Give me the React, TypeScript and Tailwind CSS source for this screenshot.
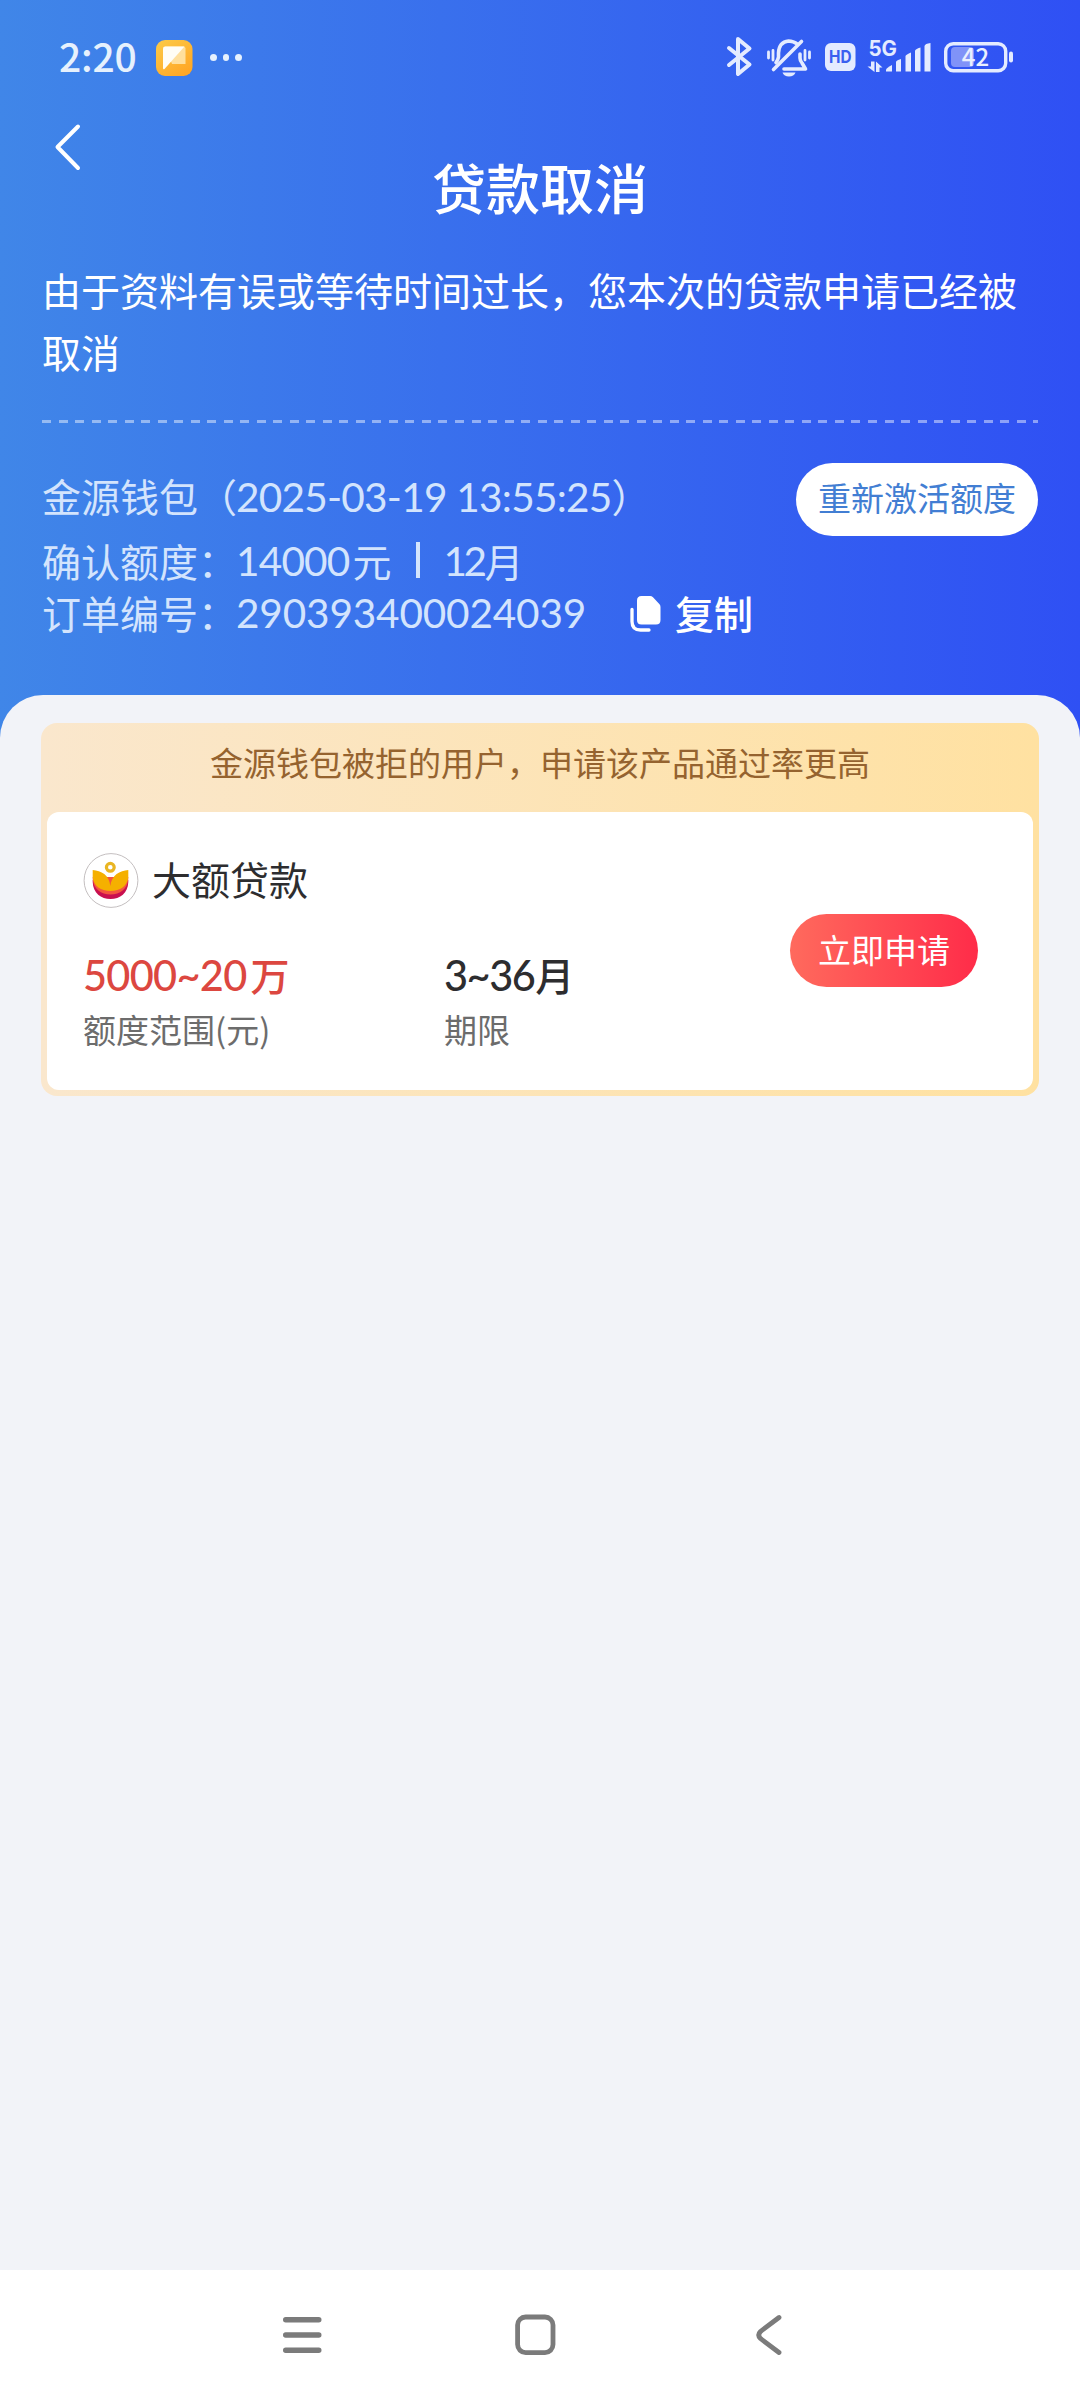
import React from "react";

const latin = "font-[Lato] leading-none";

function StatusBar() {
  return (
    <div className="flex h-[116px] items-start justify-between pl-[59px] pr-[66px]">
      <div className="flex h-[116px] items-center">
        <span className="mb-[7px] w-[78px] whitespace-nowrap font-['Noto_Sans_CJK_SC'] text-[39px] font-medium leading-[40px] tracking-[-0.2px] text-[#e6f1fd]">
          2:20
        </span>
        <svg className="ml-[19px]" width="37" height="38" viewBox="0 0 37 38">
          <defs>
            <linearGradient id="note" x1="0" y1="0" x2="0.7" y2="1">
              <stop offset="0" stopColor="#fccb48" />
              <stop offset="1" stopColor="#ffa726" />
            </linearGradient>
          </defs>
          <rect x="0" y="1" width="36.500" height="36" rx="9" fill="url(#note)" />
          <path d="M9 7.500H27.500Q29.500 7.500 29.500 9.500V25H16Z" fill="#ffdf9c" />
          <path d="M9 7.500H28.500L8.500 30Q7 31 7 29V9.500Q7 7.500 9 7.500Z" fill="#fffdf6" />
        </svg>
        <div className="ml-[17px] mb-[1px] flex gap-[6px]">
          <i className="size-[6.500px] rounded-full bg-[#e6f1fd]" />
          <i className="size-[6.500px] rounded-full bg-[#e6f1fd]" />
          <i className="size-[6.500px] rounded-full bg-[#e6f1fd]" />
        </div>
      </div>
      <svg className="mt-[20px]" width="314" height="80" viewBox="700 20 314 80" fill="none" stroke="#e4ebff" strokeLinecap="round" strokeLinejoin="round">
        <path d="M729 48L749.500 64.500L738 74V39L749.500 48.500L729 65" strokeWidth="4" />
        <g strokeWidth="3.600">
          <path d="M797.500 44.200Q793.500 41 788.500 41Q779 42 778.500 53V57Q778 60 776 62.500" />
          <path d="M801.500 41.500L773.500 69.500" />
          <path d="M800 54V58Q800 60.500 802 63L805.500 69H784" />
          <path d="M768.500 52V58M773 50.500V60M805 50.500V60M809.500 52V58" strokeWidth="2.800" />
        </g>
        <path d="M782.500 72.500H795.500Q794 76.500 789 76.500T782.500 72.500Z" fill="#e4ebff" stroke="none" />
        <rect x="825" y="43" width="30.500" height="28" rx="6" fill="#e4ebff" stroke="none" />
        <text x="829" y="62.800" fontFamily="Inter" fontWeight="700" fontSize="17" textLength="22.500" lengthAdjust="spacingAndGlyphs" fill="#3a5ff0" stroke="none">HD</text>
        <text x="868.500" y="55.500" fontFamily="Inter" fontWeight="700" fontSize="21" textLength="28.500" lengthAdjust="spacingAndGlyphs" fill="#e4ebff" stroke="none">5G</text>
        <g fill="#e4ebff" stroke="none">
          <path d="M871 61.500H874.500V72L867.500 66.500H871Z" />
          <path d="M876 61.500L882.500 67.500H879.500V72H876Z" />
          <path d="M886 71.500V69.500Q887 67.500 892 65V71.500Z" />
          <path d="M896 71.500V62Q896 60.500 901 59V71.500Z" />
          <path d="M905.500 71.500V56Q906 54.500 911 52.500V71.500Z" />
          <path d="M915 71.500V51Q915 49 920.500 47.500V71.500Z" />
          <path d="M924.500 71.500V46Q925 43.500 930.500 43V71.500Z" />
        </g>
        <rect x="951" y="47" width="23" height="20" rx="4" fill="#8093f8" stroke="none" />
        <rect x="945.700" y="43.700" width="60" height="27" rx="7.500" strokeWidth="3.400" />
        <path d="M1011 53.500V60.500" strokeWidth="4" />
        <text x="975.500" y="66" textAnchor="middle" fontFamily="Noto Sans CJK SC" fontWeight="500" fontSize="24" fill="#e9efff" stroke="none">42</text>
      </svg>
    </div>
  );
}

function Hero() {
  return (
    <header className="h-[760px] bg-linear-to-r/srgb from-[#4086e8] to-[#2f50f4]">
      <StatusBar />
      <div className="px-[42px]">
        <svg className="ml-[12px] mt-[6px]" width="30" height="50" viewBox="54 122 30 50" fill="none" stroke="#fff" strokeWidth="4" strokeLinecap="round" strokeLinejoin="round">
          <path d="M78 126.500L57.500 147L78 168" />
        </svg>
        <h1 className="-mt-[18px] text-center text-[54px] font-medium leading-[66px] text-white">贷款取消</h1>
        <p className="mt-[38px] text-[39px] leading-[62.400px] text-white">
          由于资料有误或等待时间过长，您本次的贷款申请已经被取消
        </p>
        <div className="mt-[37px] h-[3px] bg-[repeating-linear-gradient(90deg,rgba(255,255,255,0.450)_0_9px,transparent_9px_16.520px)]" />
        <div className="mt-[40px] flex h-[73px] items-start justify-between">
          <div className="whitespace-nowrap text-[39px] leading-[64px] text-[#d3e4fd]">
            金源钱包（<span className={`${latin} -ml-[1px] text-[40.500px] tracking-[-0.740px]`}>2025-03-19 13:55:25</span>）
          </div>
          <button className="h-[73px] w-[242px] rounded-full bg-white pb-[4px] text-[33px] leading-[69px] text-[#427ed3]">重新激活额度</button>
        </div>
        <div className="-mt-[1px] flex h-[50px] items-center whitespace-nowrap text-[39px] leading-[50px] text-[#d3e4fd]">
          <span>确认额度：</span>
          <span className={`${latin} -ml-[1px] mr-[3px] pt-[2px] text-[40.500px] tracking-[-0.800px]`}>14000</span>
          <span>元</span>
          <i className="ml-[25px] mr-[23px] h-[36px] w-[4px] bg-[#d3e4fd]" />
          <span className={`${latin} mr-[1px] pt-[2px] text-[40.500px] tracking-[-3.500px]`}>12</span>
          <span>月</span>
        </div>
        <div className="mt-[2px] flex h-[50px] items-center whitespace-nowrap text-[39px] leading-[50px] text-[#d3e4fd]">
          <span>订单编号：</span>
          <span className={`${latin} -ml-[1px] w-[394px] pt-[3px] text-[40.500px] tracking-[-0.150px]`}>290393400024039</span>
          <svg className="mt-[5px]" width="32" height="38" viewBox="0 0 32 38">
            <path d="M11.500 1H20Q21.800 1 23 2.200L29.300 9Q30.500 10.200 30.500 12V25Q30.500 29.500 26 29.500H11.500Q7 29.500 7 25V5.500Q7 1 11.500 1Z" fill="#fff" />
            <path d="M2 14.500V26.500Q2 35 10.500 35H19" fill="none" stroke="#fff" strokeWidth="3.300" strokeLinecap="round" />
          </svg>
          <span className="ml-[13px] font-medium text-white">复制</span>
        </div>
      </div>
    </header>
  );
}

function OfferCard() {
  return (
    <section className="rounded-[16px] bg-linear-to-r/srgb from-[#fae7cd] to-[#ffe1a1] px-[6px] pb-[6px]">
      <p className="h-[89px] pt-[4px] text-center text-[33px] leading-[70px] text-[#95632f]">
        金源钱包被拒的用户，申请该产品通过率更高
      </p>
      <div className="flex h-[278px] rounded-[12px] bg-white pl-[36px] pr-[55px] pt-[41px]">
        <div>
          <div className="flex h-[55px] items-center">
            <svg width="56" height="55" viewBox="0 0 56 55">
              <circle cx="28" cy="27.500" r="26.900" fill="#fff" stroke="#c4bfc0" />
              <path d="M9.700 27V29C10 40 18 46 27.500 46C37 46 45 40 45.300 29V27Z" fill="#c9104f" />
              <path d="M9.700 24V26C10.500 36 18 41.500 27.500 41.500C37 41.500 44.500 36 45.300 26V24Z" fill="#f4553f" />
              <path d="M9.700 17C18 17.500 26.500 22 27.300 33C28.500 22 37 17.500 45.300 17V24C44.500 33 37 38 27.500 38C18 38 10.500 33 9.700 24Z" fill="#f5b000" />
              <circle cx="27.300" cy="14.300" r="3.900" fill="none" stroke="#e9b522" strokeWidth="3.200" />
            </svg>
            <h2 className="mb-[6px] ml-[13px] text-[39px] leading-[50px] text-[#2d2d2f]">大额贷款</h2>
          </div>
          <div className="mt-[41px] flex font-medium text-[39px] leading-[50px]">
            <div className="flex w-[361px] items-center text-[#dc4740]">
              <span className={`${latin} mr-[4px] pt-[3px] text-[41.500px] tracking-[-0.700px]`}>5000~20</span>万
            </div>
            <div className="flex items-center text-[#2d2d2f]">
              <span className={`${latin} mr-[1px] pt-[3px] text-[41.500px] tracking-[-1.500px]`}>3~36</span>月
            </div>
          </div>
          <div className="mt-[8px] flex text-[33px] leading-[44px] text-[#6c6c6c]">
            <span className="w-[361px]">额度范围(元)</span>
            <span>期限</span>
          </div>
        </div>
        <button className="ml-auto mt-[61px] h-[73px] w-[188px] rounded-full bg-linear-to-r/srgb from-[#ff6a5d] to-[#ff2c49] pb-[3px] text-[33px] leading-[70px] text-white">
          立即申请
        </button>
      </div>
    </section>
  );
}

function NavigationBar() {
  return (
    <nav className="flex h-[130px] items-start bg-white pl-[280px] pt-[38px]">
      <svg width="45" height="54" viewBox="280 2308 45 54" stroke="#7b7b7b" strokeWidth="5.400" strokeLinecap="round">
        <path d="M285.700 2319.700H318.800M285.700 2335H318.800M285.700 2350.300H318.800" />
      </svg>
      <svg className="ml-[187px]" width="46" height="54" viewBox="512 2308 46 54" fill="none" stroke="#7b7b7b" strokeWidth="4.800">
        <rect x="517.600" y="2317" width="35.400" height="35.600" rx="8" />
      </svg>
      <svg className="ml-[194px]" width="36" height="54" viewBox="752 2308 36 54" fill="none" stroke="#7b7b7b" strokeWidth="4.800" strokeLinecap="round">
        <path d="M779 2317.500L760.500 2331.500Q757 2335 760.500 2338.500L779 2352.500" />
      </svg>
    </nav>
  );
}

export default function App() {
  return (
    <div lang="zh-CN" className="flex h-[2400px] w-[1080px] flex-col overflow-hidden bg-[#f2f3f8] font-['Noto_Sans_CJK_SC',sans-serif]">
      <Hero />
      <main className="relative -mt-[65px] flex-1 rounded-t-[43px] bg-[#f2f3f8] px-[41px] pt-[28px]">
        <OfferCard />
      </main>
      <NavigationBar />
    </div>
  );
}
